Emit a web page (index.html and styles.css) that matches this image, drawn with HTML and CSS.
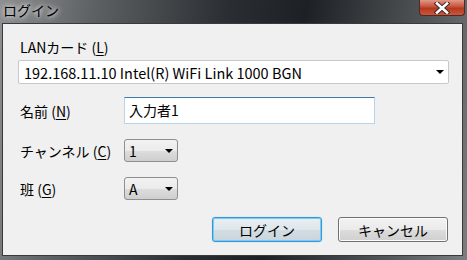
FILE: index.html
```html
<!DOCTYPE html>
<html lang="ja">
<head>
    <meta charset="UTF-8">
    <title>ログイン</title>
    <link rel="stylesheet" href="styles.css">
</head>
<body>
    <div class="window">
        <div class="titlebar">
            <span class="title">ログイン</span>
            <span class="close-btn">
                <svg width="18" height="12" viewBox="0 0 18 12">
                    <path d="M4 1.5 L14 10.5 M14 1.5 L4 10.5" stroke="#3a2a2a" stroke-width="4.5" stroke-linecap="square"/>
                    <path d="M4 1.5 L14 10.5 M14 1.5 L4 10.5" stroke="#ffffff" stroke-width="2.6" stroke-linecap="square"/>
                </svg>
            </span>
        </div>
        <div class="client">
            <div class="lan-label">LANカード (<u>L</u>)</div>
            <div class="combo wide">
                <span>192.168.11.10 Intel(R) WiFi Link 1000 BGN</span>
                <span class="arrow"></span>
            </div>

            <div class="row first">
                <span class="label">名前 (<u>N</u>)</span>
                <div class="textbox">入力者1</div>
            </div>
            <div class="row">
                <span class="label">チャンネル (<u>C</u>)</span>
                <div class="combo small"><span>1</span><span class="arrow"></span></div>
            </div>
            <div class="row">
                <span class="label">班 (<u>G</u>)</span>
                <div class="combo small"><span>A</span><span class="arrow"></span></div>
            </div>

            <div class="buttons">
                <button class="btn default">ログイン</button>
                <button class="btn">キャンセル</button>
            </div>
        </div>
    </div>
</body>
</html>
```
FILE: styles.css
```css
html, body {
    margin: 0;
    padding: 0;
}
body {
    font-family: "Noto Sans CJK JP", sans-serif;
    font-size: 14px;
    color: #000;
    width: 467px;
    height: 260px;
    overflow: hidden;
}
.window {
    width: 467px;
    height: 260px;
    box-sizing: border-box;
    padding: 0 4px 4px 2px;
    display: flex;
    flex-direction: column;
    background: linear-gradient(100deg, #8e9092 0%, #5f6265 18%, #2a2d31 45%, #1d2024 60%, #55585b 85%, #7c7f82 100%);
}
.titlebar {
    height: 23px;
    display: flex;
    justify-content: space-between;
    align-items: flex-start;
}
.title {
    margin: 1px 0 0 1px;
    font-size: 14px;
    line-height: 18px;
    text-shadow: 0 0 4px #e8e8e8, 0 0 6px #e8e8e8;
}
.close-btn {
    width: 46px;
    height: 16px;
    margin-right: -2px;
    box-sizing: border-box;
    border: 1px solid #4b2b24;
    border-top: none;
    border-radius: 0 0 4px 4px;
    background: linear-gradient(#e09a88 0%, #c9503a 45%, #b03a21 55%, #d0553a 100%);
    display: flex;
    justify-content: center;
    align-items: center;
}
.client {
    flex: 1;
    border: 1px solid #3a3a3a;
    background: #f0f0f0;
    padding: 12px 0 0 15px;
}
.lan-label {
    padding-left: 2px;
    height: 24px;
    line-height: 22px;
}
.combo {
    display: flex;
    justify-content: space-between;
    align-items: center;
    box-sizing: border-box;
}
.combo.wide {
    width: 431px;
    height: 24px;
    background: #fff;
    border: 1px solid #c8c8c8;
    border-radius: 2px;
    padding: 0 4px 0 5px;
    font-size: 14.5px;
}
.combo.small {
    width: 54px;
    height: 23px;
    border: 1px solid #8e8f8f;
    border-radius: 3px;
    background: linear-gradient(#f2f2f2 0%, #ebebeb 50%, #dddddd 51%, #cfcfcf 100%);
    padding: 0 4px 0 4px;
}
.arrow {
    width: 0;
    height: 0;
    border-left: 4px solid transparent;
    border-right: 4px solid transparent;
    border-top: 4px solid #000;
}
.row {
    display: flex;
    align-items: center;
    margin-top: 15px;
}
.row.first {
    margin-top: 13px;
}
.label {
    width: 104px;
    padding-left: 2px;
}
.textbox {
    width: 251px;
    height: 27px;
    box-sizing: border-box;
    background: #fff;
    border: 1px solid #b7d4ec;
    border-top-color: #3d7bad;
    padding: 1px 0 0 4px;
    line-height: 22px;
}
.buttons {
    display: flex;
    gap: 16px;
    margin: 17px 0 0 194px;
}
.btn {
    width: 110px;
    height: 25px;
    font-family: inherit;
    font-size: 14px;
    padding: 0;
    border: 1px solid #707070;
    border-radius: 3px;
    background: linear-gradient(#f2f2f2 0%, #ebebeb 50%, #dddddd 51%, #cfcfcf 100%);
    box-shadow: inset 0 0 0 1px #fcfcfc;
}
.btn.default {
    border-color: #3399dd;
    background: linear-gradient(#e8eef2 0%, #dfe7ec 50%, #d2dde3 51%, #c9d5dc 100%);
    box-shadow: inset 0 0 0 1px #7ccaf0, 0 0 1px #5bb6ec;
}
u {
    text-decoration: underline;
    text-underline-offset: 2px;
}
```
